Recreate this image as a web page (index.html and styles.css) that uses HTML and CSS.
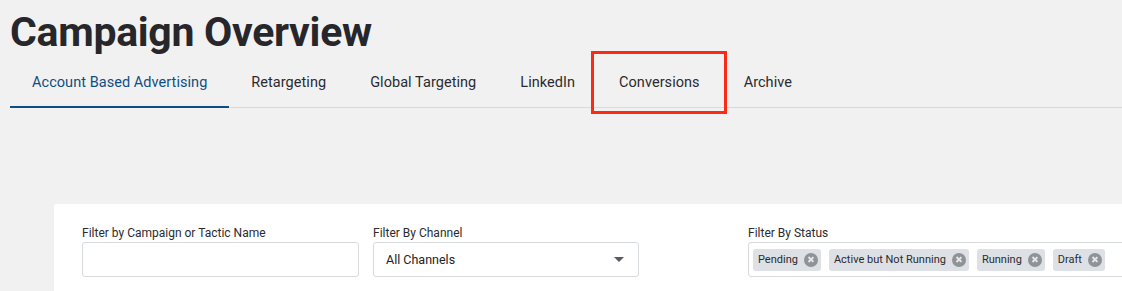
FILE: index.html
```html
<!DOCTYPE html>
<html lang="en">
<head>
  <title>Campaign Overview</title>
  <link rel="stylesheet" href="styles.css">
</head>
<body>
  <div class="page">
    <h1 class="title">Campaign Overview</h1>

    <nav class="tabs">
      <a class="tab active">Account Based Advertising</a>
      <a class="tab">Retargeting</a>
      <a class="tab">Global Targeting</a>
      <a class="tab">LinkedIn</a>
      <a class="tab highlight">Conversions</a>
      <a class="tab">Archive</a>
    </nav>

    <div class="card">
      <div class="field name-field">
        <label>Filter by Campaign or Tactic Name</label>
        <input type="text" class="input">
      </div>

      <div class="field channel-field">
        <label>Filter By Channel</label>
        <div class="input select">
          <span>All Channels</span>
          <span class="caret"></span>
        </div>
      </div>

      <div class="field status-field">
        <label>Filter By Status</label>
        <div class="input chips">
          <span class="chip">Pending<i class="chip-x"></i></span>
          <span class="chip">Active but Not Running<i class="chip-x"></i></span>
          <span class="chip">Running<i class="chip-x"></i></span>
          <span class="chip">Draft<i class="chip-x"></i></span>
        </div>
      </div>
    </div>
  </div>
</body>
</html>
```

FILE: styles.css
```css
* {
  box-sizing: border-box;
}

body {
  margin: 0;
  background: #f1f1f1;
  font-family: Roboto, 'Liberation Sans', sans-serif;
  color: #2b2b2f;
  overflow: hidden;
}

.page {
  padding: 0 0 0 10px;
}

.title {
  margin: 0;
  padding-top: 7px;
  font-size: 41px;
  line-height: 50px;
  font-weight: 700;
  letter-spacing: -0.3px;
  color: #27272b;
}

.tabs {
  display: flex;
  margin-top: 3px;
  border-bottom: 1px solid #d6dcdc;
}

.tab {
  position: relative;
  padding: 14px 22px 15px;
  font-size: 14.5px;
  line-height: 18px;
  letter-spacing: 0.05px;
  color: #2b2b2f;
  cursor: pointer;
}

.tab.active {
  color: #0d4f84;
  border-bottom: 2px solid #0d4f84;
  margin-bottom: -1px;
  padding-bottom: 14px;
}

.tab.highlight::after {
  content: "";
  position: absolute;
  left: -6px;
  right: -5px;
  top: -9px;
  bottom: -7px;
  border: 3px solid #fb2a15;
}

.card {
  display: flex;
  margin: 96px 0 0 44px;
  padding: 22px 0 24px 28px;
  background: #fff;
  border-top-left-radius: 3px;
}

.field {
  display: flex;
  flex-direction: column;
}

.field label {
  font-size: 12px;
  line-height: 14px;
  margin-bottom: 2px;
  color: #2b2b2f;
}

.input {
  height: 35px;
  border: 1px solid #d6dadd;
  border-radius: 3px;
  background: #fff;
  font-family: inherit;
}

.name-field {
  width: 277px;
}

.channel-field {
  width: 266px;
  margin-left: 14px;
}

.status-field {
  margin-left: 109px;
  flex: 1;
}

.status-field .input {
  margin-right: -10px;
}

.select {
  display: flex;
  align-items: center;
  justify-content: space-between;
  padding: 0 14px 0 12px;
  font-size: 12.5px;
  color: #222;
}

.caret {
  width: 0;
  height: 0;
  border-left: 5px solid transparent;
  border-right: 5px solid transparent;
  border-top: 5px solid #555b60;
}

.chips {
  display: flex;
  align-items: center;
  gap: 8px;
  padding: 0 4px;
}

.chip {
  display: flex;
  align-items: center;
  gap: 6px;
  height: 22px;
  padding: 0 3px 0 5px;
  border-radius: 3px;
  background: #dde0e4;
  font-size: 11px;
  color: #2b2b2f;
  white-space: nowrap;
}

.chip-x {
  position: relative;
  width: 14px;
  height: 14px;
  border-radius: 50%;
  background: #8f9397;
}

.chip-x::before,
.chip-x::after {
  content: "";
  position: absolute;
  left: 6.1px;
  top: 3.5px;
  width: 1.8px;
  height: 7px;
  background: #e4e6e9;
  transform: rotate(45deg);
}

.chip-x::after {
  transform: rotate(-45deg);
}
```
